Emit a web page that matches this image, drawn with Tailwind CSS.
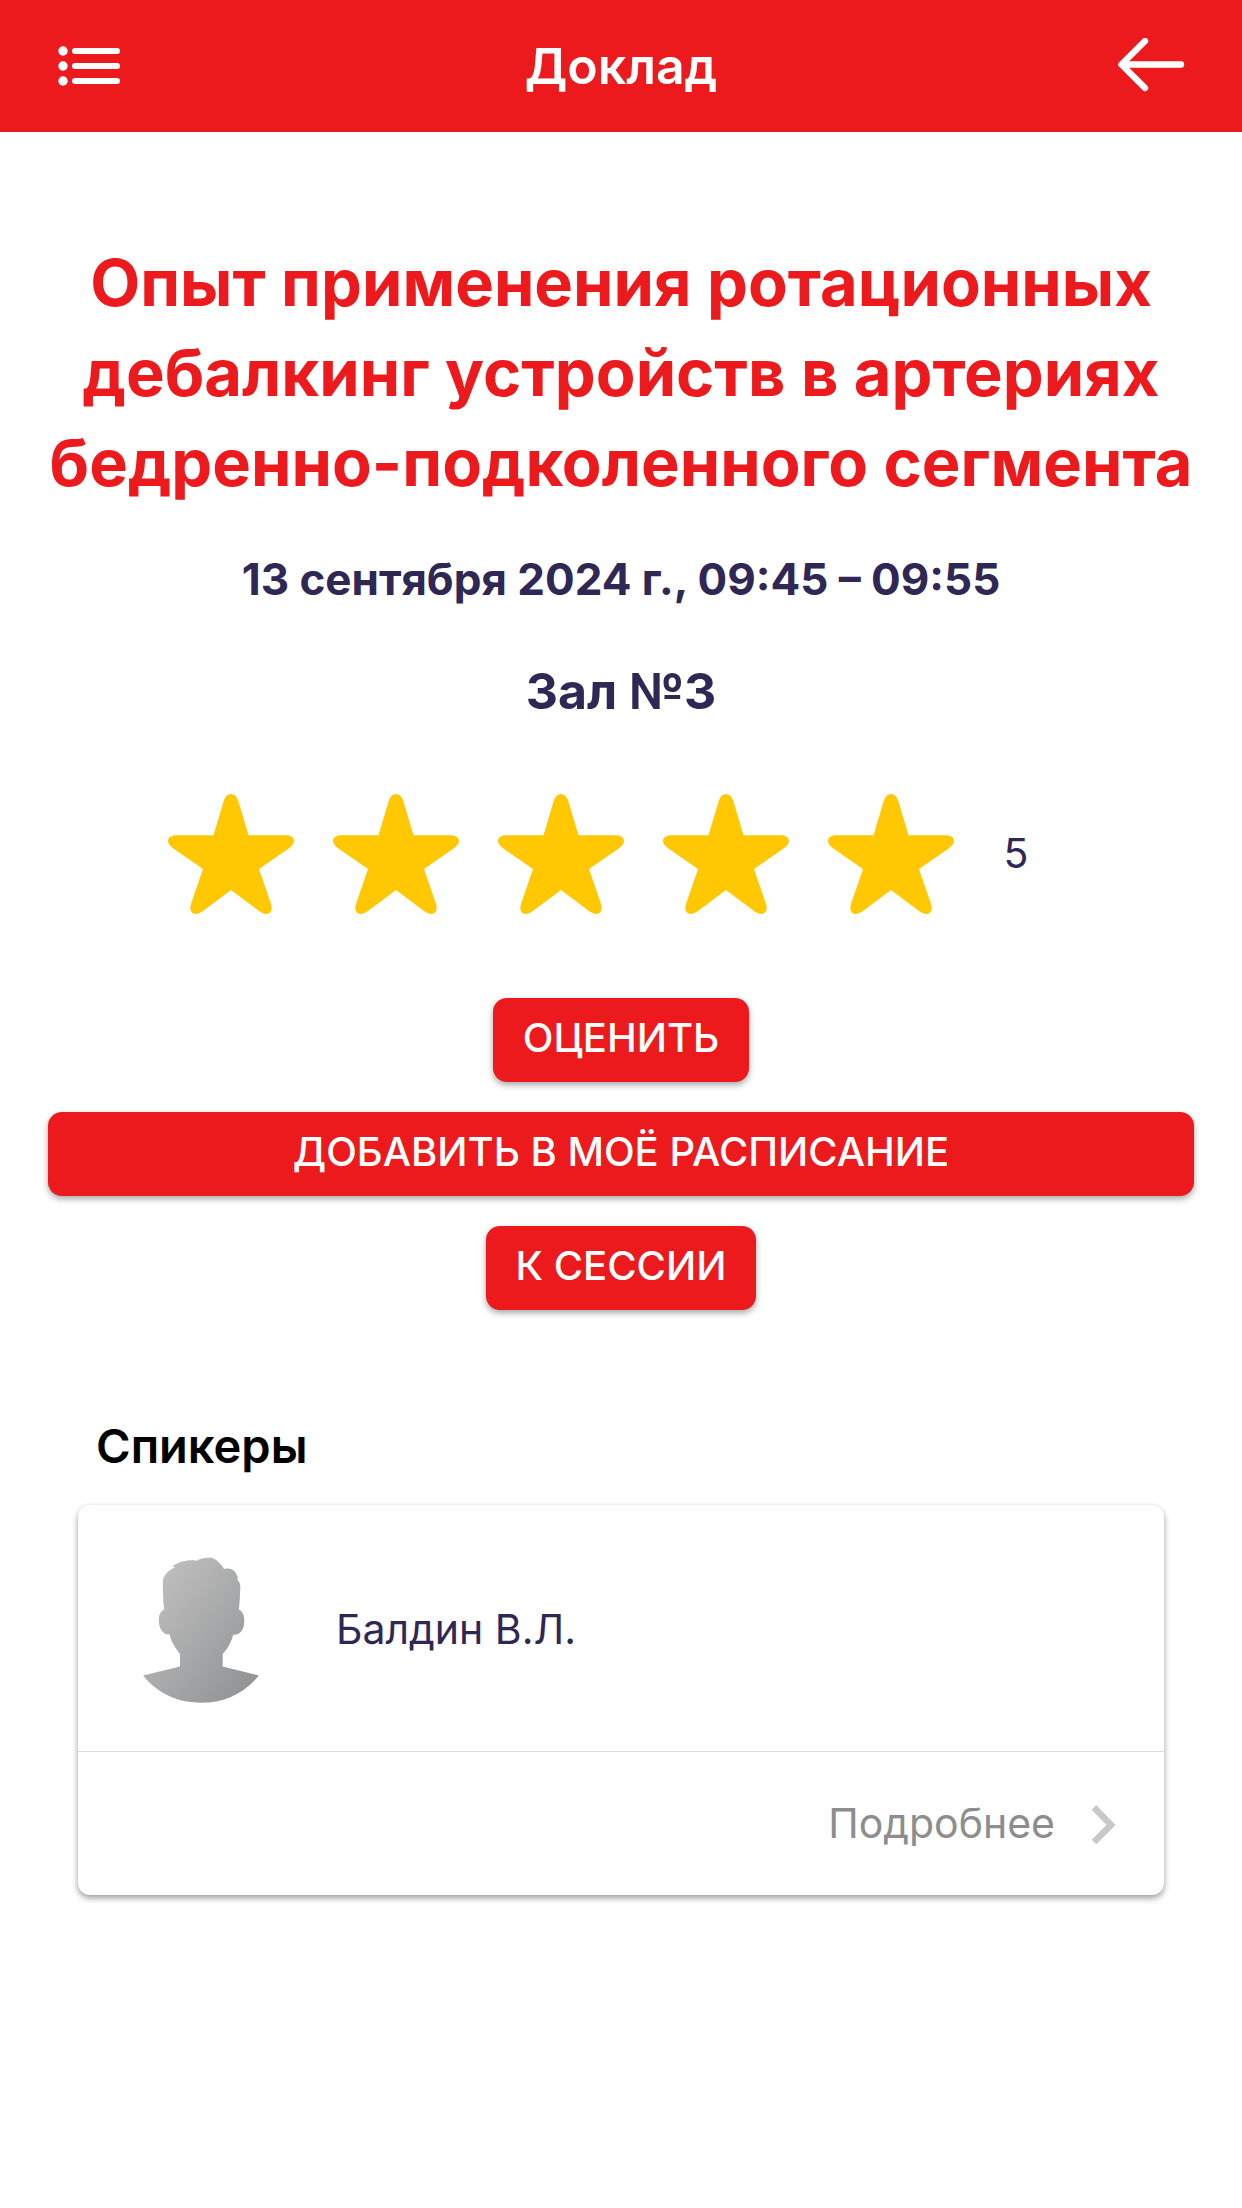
<!DOCTYPE html>
<html lang="ru">
<head>
<meta charset="utf-8">
<meta name="viewport" content="width=device-width, initial-scale=1">
<title>Доклад</title>
<script src="https://cdn.jsdelivr.net/npm/@tailwindcss/browser@4"></script>
</head>
<body class="min-h-screen bg-white font-['Inter','Liberation_Sans',sans-serif] text-[41px] text-[#2f2754]">
<svg class="hidden" aria-hidden="true">
  <symbol id="star" viewBox="0 0 126 120">
    <path fill="#ffc803" d="M63 0C66 0 68.500 2 70 6L80.500 41.300H118C122.500 41.300 126 43.500 126 47C126 49.500 124 52 121 54.300L91 75L103 110C105 115.500 102.500 120 98.500 120C96 120 94 119 91 117L63 96L35 117C32 119 30 120 27.500 120C23.500 120 21 115.500 23 110L35 75L5 54.300C2 52 0 49.500 0 47C0 43.500 3.500 41.300 8 41.300H45.500L56 6C57.500 2 60 0 63 0Z"/>
  </symbol>
</svg>

<header class="grid h-[132px] grid-cols-[1fr_auto_1fr] items-center bg-[#ec1a1d] px-14 text-white">
  <button type="button" aria-label="Меню" class="justify-self-start">
    <svg class="block h-11 w-16" viewBox="0 0 64 44" fill="currentColor">
      <circle cx="7" cy="7" r="4.700"/><circle cx="7" cy="22" r="4.700"/><circle cx="7" cy="37" r="4.700"/>
      <rect x="16" y="4" width="48" height="6" rx="3"/><rect x="16" y="19" width="48" height="6" rx="3"/><rect x="16" y="34" width="48" height="6" rx="3"/>
    </svg>
  </button>
  <h1 class="text-[50px] leading-[60px] font-semibold">Доклад</h1>
  <button type="button" aria-label="Назад" class="justify-self-end">
    <svg class="block h-[56px] w-[68px]" viewBox="0 0 68 56" fill="none" stroke="currentColor" stroke-width="6.400" stroke-linecap="round" stroke-linejoin="round">
      <path d="M63 26.500H4M27 3L3.500 26.500L27 50"/>
    </svg>
  </button>
</header>

<main>
  <section class="flex flex-col items-center px-12 pt-[106px] text-center">
    <h2 class="text-[65px] leading-[90px] font-bold text-[#ec1a1d]">Опыт применения ротационных дебалкинг устройств в артериях бедренно-подколенного сегмента</h2>
    <p class="mt-[41px] text-[44px] leading-[60px] font-bold">13 сентября 2024 г., 09:45 – 09:55</p>
    <p class="mt-[52px] text-[50px] leading-[60px] font-bold">Зал №3</p>

    <div class="mt-[73px] flex items-center gap-[39px]">
      <div class="flex gap-[39px]" role="img" aria-label="Оценка 5 из 5">
        <svg class="h-[120px] w-[126px]"><use href="#star"/></svg>
        <svg class="h-[120px] w-[126px]"><use href="#star"/></svg>
        <svg class="h-[120px] w-[126px]"><use href="#star"/></svg>
        <svg class="h-[120px] w-[126px]"><use href="#star"/></svg>
        <svg class="h-[120px] w-[126px]"><use href="#star"/></svg>
      </div>
      <span class="w-[82px] pl-[11px] text-left">5</span>
    </div>

    <div class="mt-[84px] flex w-full flex-col items-center gap-[30px] text-[40px] leading-[80px] font-medium text-white">
      <button type="button" class="h-[84px] rounded-[14px] bg-[#ec1a1d] px-[30px] pb-1 shadow-[0_3px_6px_rgba(0,0,0,0.35)]">ОЦЕНИТЬ</button>
      <button type="button" class="h-[84px] w-full rounded-[14px] bg-[#ec1a1d] px-[30px] pb-1 shadow-[0_3px_6px_rgba(0,0,0,0.35)]">ДОБАВИТЬ В МОЁ РАСПИСАНИЕ</button>
      <button type="button" class="h-[84px] rounded-[14px] bg-[#ec1a1d] px-[30px] pb-1 shadow-[0_3px_6px_rgba(0,0,0,0.35)]">К СЕССИИ</button>
    </div>
  </section>

  <section class="px-[78px] pt-[106px]">
    <h3 class="px-[18px] text-[47px] leading-[60px] font-semibold text-black">Спикеры</h3>
    <article class="mt-[29px] rounded-xl bg-white shadow-[0_3px_6px_rgba(0,0,0,0.4)]">
      <div class="flex h-[247px] items-center gap-[77px] border-b border-[#dedede] pt-[3px] pl-[65px]">
        <svg class="h-[146px] w-[116px]" viewBox="233 470 323 440" preserveAspectRatio="none" role="img" aria-label="Фото спикера">
          <defs><linearGradient id="shade" x1="0" y1="0" x2="1" y2="1"><stop offset="0.150" stop-color="#bdbdbd"/><stop offset="0.900" stop-color="#939496"/></linearGradient></defs>
          <path fill="url(#shade)" d="M233 827L336 800V762C322 742 311 725 307 703C290 707 277 685 277 663C277 645 281 633 292 629C289 600 287 560 289 537C296 518 309 507 322 502L315 497C334 485 355 477 384 481C392 473 408 472 425 472C440 479 452 492 459 506C480 500 494 512 498 538H494C501 543 504 552 504 560C503 590 502 610 500 629C510 632 515 645 515 663C515 688 504 706 484 704C480 725 470 744 455 762V800L556 827C512 885 455 909 396 909C333 909 277 885 233 827Z"/>
        </svg>
        <span>Балдин В.Л.</span>
      </div>
      <a href="#" class="flex h-[143px] items-center justify-end gap-9 pr-[47px] text-[#8d8d8d]">
        <span>Подробнее</span>
        <svg class="h-10 w-[26px]" viewBox="0 0 26 40" fill="none" stroke="#c7c7cc" stroke-width="6.500"><path d="M3 3.500L20 21L3 38"/></svg>
      </a>
    </article>
  </section>
</main>
</body>
</html>
